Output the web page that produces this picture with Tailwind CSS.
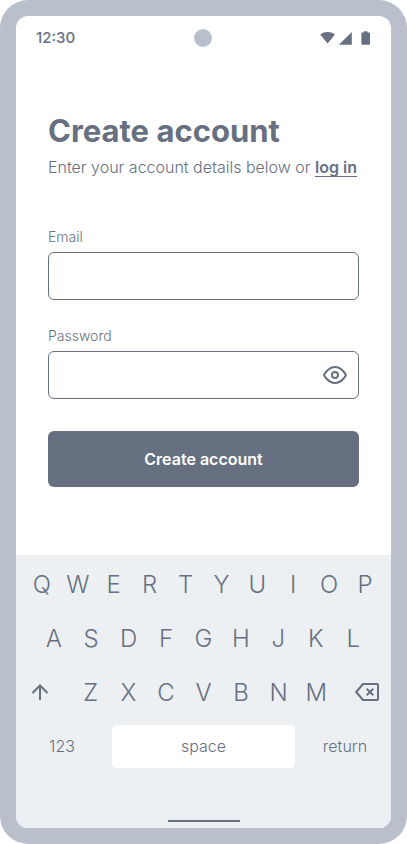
<!DOCTYPE html>
<html lang="en">
<head>
<meta charset="utf-8">
<meta name="viewport" content="width=device-width, initial-scale=1">
<title>Create account</title>
<script src="https://cdn.jsdelivr.net/npm/@tailwindcss/browser@4"></script>
</head>
<body class="bg-white font-['Inter',sans-serif] text-[#677081]">
<div class="flex min-h-screen flex-col rounded-[28px] bg-[#b9c0cb] p-4">
  <div class="flex flex-1 flex-col overflow-hidden rounded-xl bg-white">
    <header class="grid h-11 grid-cols-3 items-center px-5">
      <time class="text-[15px] font-medium leading-5">12:30</time>
      <span class="size-[18px] justify-self-center rounded-full bg-[#b9c0cb]"></span>
      <div class="flex items-center justify-end">
        <svg class="h-4 w-[52px]" viewBox="0 0 52 16" fill="currentColor" aria-hidden="true">
          <path d="M1.2 4.5C5.4 1.2 11.800 1.200 16 4.500L8.600 13.400Z"/>
          <path d="M32.800 2V14.800H20Z"/>
          <path d="M44.600 2.400V1.900Q44.600 1.200 45.300 1.200H47.900Q48.600 1.200 48.600 1.900V2.400H50Q51 2.400 51 3.400V13.800Q51 14.800 50 14.800H43.400Q42.400 14.800 42.400 13.800V3.400Q42.400 2.400 43.400 2.400Z"/>
        </svg>
      </div>
    </header>

    <main class="flex-1 px-8 pt-[51px]">
      <h1 class="text-[31px] font-bold leading-10">Create account</h1>
      <p class="whitespace-nowrap text-base font-[350] leading-8">Enter your account details below or <a href="#" class="font-semibold underline decoration-1 underline-offset-3">log in</a></p>
      <form class="mt-11">
        <label for="email" class="block text-sm font-[350] leading-5">Email</label>
        <input id="email" type="email" class="mt-[5px] block h-12 w-full rounded-md border border-[#677081] px-4">
        <label for="password" class="mt-[26px] block text-sm font-[350] leading-5">Password</label>
        <div class="mt-[5px] flex h-12 items-center rounded-md border border-[#677081] pr-[11px]">
          <input id="password" type="password" class="h-full min-w-0 flex-1 px-4">
          <button type="button" aria-label="Show password">
            <svg class="size-6" viewBox="0 0 24 24" fill="none" stroke="currentColor" stroke-width="2" stroke-linecap="round" stroke-linejoin="round"><path d="M1 12s4-8 11-8 11 8 11 8-4 8-11 8-11-8-11-8z"/><circle cx="12" cy="12" r="3"/></svg>
          </button>
        </div>
        <button type="submit" class="mt-8 h-14 w-full rounded-md bg-[#677081] font-semibold text-white">Create account</button>
      </form>
    </main>

    <section aria-label="Keyboard" class="flex flex-col bg-[#ecf0f3] pt-[3px] text-2xl font-[350]">
      <div class="grid h-[54px] grid-cols-10 px-2">
        <button>Q</button><button>W</button><button>E</button><button>R</button><button>T</button><button>Y</button><button>U</button><button>I</button><button>O</button><button>P</button>
      </div>
      <div class="grid h-[54px] grid-cols-9 px-[19px]">
        <button>A</button><button>S</button><button>D</button><button>F</button><button>G</button><button>H</button><button>J</button><button>K</button><button>L</button>
      </div>
      <div class="flex h-[54px] items-center justify-between px-3">
        <button aria-label="Shift">
          <svg class="size-6" viewBox="0 0 24 24" fill="none" stroke="currentColor" stroke-width="2"><path d="M12 19V4.500M4.500 12 12 4.500l7.500 7.500"/></svg>
        </button>
        <div class="grid h-full w-[263px] grid-cols-7">
          <button>Z</button><button>X</button><button>C</button><button>V</button><button>B</button><button>N</button><button>M</button>
        </div>
        <button aria-label="Backspace">
          <svg class="size-6" viewBox="0 0 24 24" fill="none" stroke="currentColor" stroke-width="2" stroke-linejoin="round"><path d="M8 3H22a1.200 1.200 0 0 1 1 1v14a1.200 1.200 0 0 1-1 1H8L1.200 11z"/><path d="M11.700 7.700l6.600 6.600M18.300 7.700l-6.600 6.600"/></svg>
        </button>
      </div>
      <div class="grid h-[52px] grid-cols-[1fr_183px_1fr] items-center text-base font-[350]">
        <button class="h-full pr-1">123</button>
        <button class="h-[43px] rounded-[5px] bg-white">space</button>
        <button class="h-full pl-1">return</button>
      </div>
      <div class="mt-12 mb-[6px] h-[2px] w-[72px] self-center bg-[#677081]"></div>
    </section>
  </div>
</div>
</body>
</html>
